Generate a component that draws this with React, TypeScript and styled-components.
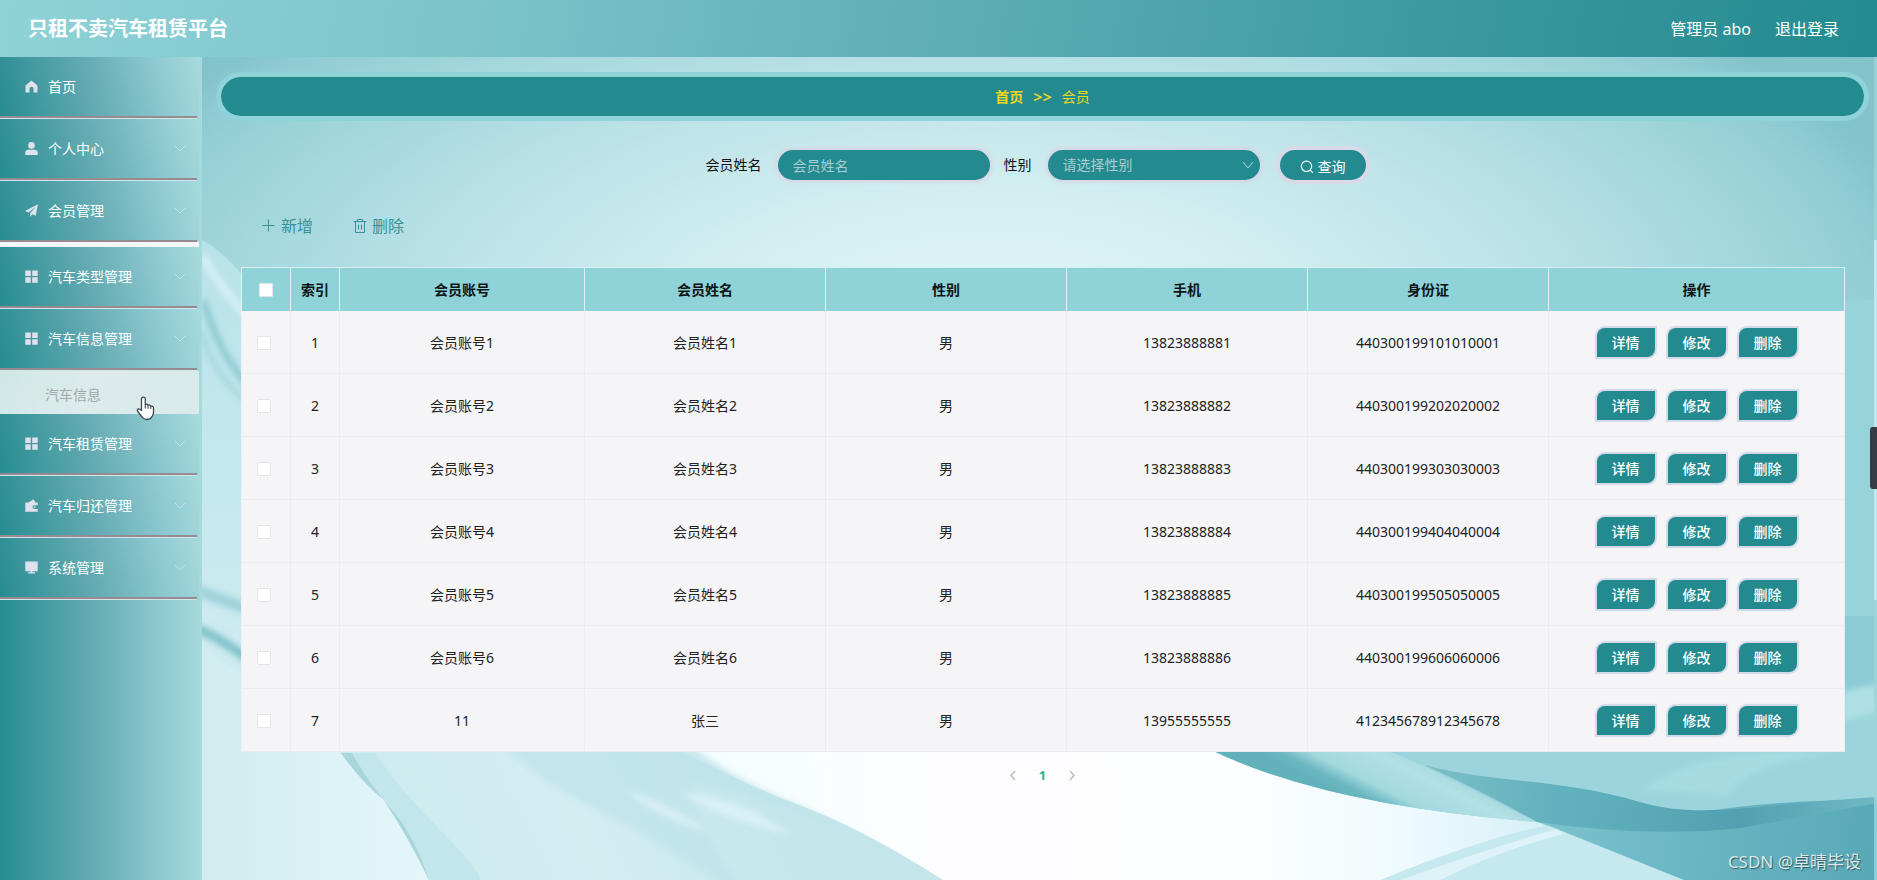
import React from "react";
import styled, { createGlobalStyle, css } from "styled-components";

const GlobalStyle = createGlobalStyle`
  * { box-sizing: border-box; }
  body {
    margin: 0;
    font-family: "Noto Sans", "Noto Sans CJK SC", sans-serif;
    font-size: 14px;
    line-height: 20px;
    color: #222;
  }
  button, input, select { font: inherit; margin: 0; }
  a { color: inherit; text-decoration: none; }
`;

const teal = "#238b90";
const aqua = "#8fd2d8";
const lilac = "#d9d9e8";

const Page = styled.div`
  min-height: 100vh;
  display: flex;
  flex-direction: column;
`;

const Header = styled.header`
  height: 57px;
  padding: 0 38px 0 28px;
  display: flex;
  align-items: center;
  justify-content: space-between;
  color: #fff;
  background: linear-gradient(100deg, ${aqua} 0%, #7cc4ca 25%, #3a989e 78%, ${teal} 100%);
`;

const Title = styled.h1`
  margin: 0;
  font-size: 20px;
  line-height: 28px;
  font-weight: 700;
`;

const Account = styled.div`
  display: flex;
  gap: 24px;
  font-size: 16px;
  line-height: 24px;
`;

const Body = styled.div`
  flex: 1;
  display: flex;
`;

const Sidebar = styled.nav`
  flex: 0 0 202px;
  background: linear-gradient(90deg, #268c90 0%, #67acb4 48%, #8fcad2 80%, #a6dadd 100%);
`;

const MenuList = styled.ul`
  list-style: none;
  margin: 0;
  padding: 0;
`;

const MenuItem = styled.li<{ $divided?: boolean }>`
  margin-right: 3px;
  height: ${(p) => (p.$divided ? 66 : 62)}px;
  background: ${(p) =>
    p.$divided
      ? "linear-gradient(#f4f6f8, #f4f6f8) left bottom / 100% 5px no-repeat,"
      : "linear-gradient(#d3e6ea, #d3e6ea) left bottom / 197px 1px no-repeat,"}
    linear-gradient(76deg, #268c90 0%, #67acb4 48%, #8fcad2 80%, #a6dadd 100%);
`;

const menuRow = css`
  width: 197px;
  height: 61px;
  padding: 0 11px 0 25px;
  border: 0;
  border-bottom: 2px solid #978b92;
  display: flex;
  align-items: center;
  gap: 10px;
  color: #fff;
  font-size: 14px;
  text-align: left;
  background: none;
`;

const MenuLink = styled.a`
  ${menuRow}
`;

const MenuButton = styled.button`
  ${menuRow}
`;

const MenuText = styled.span`
  flex: 1;
`;

const SubItem = styled.a`
  position: relative;
  display: flex;
  align-items: center;
  height: 43px;
  margin-right: 3px;
  padding: 4px 0 0 45px;
  color: #9ea9ad;
  background: linear-gradient(120deg, #cfe7e6, #dcebeb 40%, #d8eaea);
`;

const Cursor = styled.svg`
  position: absolute;
  left: 136px;
  top: 25px;
  z-index: 2;
`;

const Main = styled.main`
  position: relative;
  flex: 1;
  min-width: 0;
  padding: 15px 8px 0 14px;
`;

const Backdrop = styled.svg`
  position: absolute;
  inset: 0;
  width: 100%;
  height: 100%;
  z-index: -1;
`;

const Breadcrumb = styled.nav`
  height: 49px;
  border: 5px solid ${aqua};
  border-radius: 25px;
  background: ${teal};
  background-clip: padding-box;
  display: flex;
  align-items: center;
  justify-content: center;
  gap: 10px;
  color: #f0d81e;
`;

const Crumb = styled.a`
  font-weight: 700;
`;

const Arrows = styled.span`
  font-size: 16px;
  font-weight: 600;
`;

const Panel = styled.section`
  padding: 29px 25px 0;
`;

const SearchForm = styled.form`
  display: flex;
  align-items: center;
  justify-content: center;
`;

const Field = styled.label`
  display: flex;
  align-items: center;
  gap: 16px;
  margin-right: 14px;
  color: #111;
`;

const control = css`
  width: 212px;
  height: 30px;
  padding: 0 15px;
  border: 0;
  border-radius: 15px;
  outline: 0;
  background: ${teal};
  color: #a9cdd0;
  box-shadow: 0 0 4px 2px #d9d3e4;
`;

const TextInput = styled.input`
  ${control}
  &::placeholder { color: #a9cdd0; opacity: 1; }
`;

const SelectWrap = styled.span`
  position: relative;
  display: flex;
`;

const Select = styled.select`
  ${control}
  appearance: none;
`;

const SelectArrow = styled.span`
  position: absolute;
  right: 6px;
  top: 10px;
  display: flex;
  color: #b4d2d8;
  pointer-events: none;
`;

const SearchButton = styled.button`
  width: 86px;
  height: 30px;
  margin: 0 14px 0 6px;
  padding: 4px 0 0;
  border: 0;
  border-radius: 15px;
  display: flex;
  align-items: center;
  justify-content: center;
  gap: 4px;
  color: #fff;
  background: ${teal};
  box-shadow: 0 0 1px 4px ${lilac};
`;

const Toolbar = styled.div`
  display: flex;
  gap: 40px;
  padding: 34px 0 29px 21px;
`;

const ToolButton = styled.button`
  display: flex;
  align-items: center;
  gap: 5px;
  padding: 0;
  border: 0;
  background: none;
  color: #3a9296;
  font-size: 16px;
  line-height: 24px;
`;

const Table = styled.table`
  width: 100%;
  table-layout: fixed;
  border-collapse: separate;
  border-spacing: 0;
  border-left: 1px solid #e8f2f5;
  text-align: center;
`;

const HeadCell = styled.th`
  height: 44px;
  padding: 0;
  border-top: 1px solid #d4eef2;
  border-right: 1px solid #e0f2f5;
  background: ${aqua};
  color: #0b1414;
  font-weight: 700;
`;

const Cell = styled.td`
  height: 63px;
  padding: 1px 0 0;
  border-right: 1px solid #ebebf4;
  border-bottom: 1px solid #ebebf4;
  background: #f5f4f7;
`;

const CheckBox = styled.input`
  appearance: none;
  display: block;
  width: 14px;
  height: 14px;
  margin: 0 auto;
  border: 1px solid #e3e5e8;
  border-radius: 1px;
  background: #fff;
`;

const CheckCell = styled(Cell)`
  padding-right: 4px;
`;

const Actions = styled.div`
  display: flex;
  justify-content: center;
  gap: 13px;
`;

const ActionButton = styled.button`
  width: 58px;
  height: 29px;
  padding: 0;
  border: 0;
  border-radius: 8px 0 8px 0;
  color: #fff;
  font-weight: 500;
  background: ${teal};
  box-shadow: 0 0 1px 2px #d3d9e8;
`;

const Pagination = styled.nav`
  display: flex;
  justify-content: center;
  align-items: center;
  gap: 22px;
  padding-top: 13px;
`;

const PageArrow = styled.button`
  display: flex;
  padding: 0;
  border: 0;
  background: none;
  color: #b9bdc2;
`;

const PageNumber = styled.button`
  padding: 0;
  border: 0;
  background: none;
  color: #2fb388;
  font-size: 13px;
  font-weight: 700;
`;

const Watermark = styled.div`
  position: absolute;
  right: 16px;
  bottom: 6px;
  font-size: 17px;
  line-height: 24px;
  color: #d9e8ea;
  text-shadow: 1px 1px 1px #35565d;
`;

const SideTab = styled.div`
  position: absolute;
  right: 0;
  top: 370px;
  width: 7px;
  height: 62px;
  border-radius: 3px 0 0 3px;
  background: #343d41;
`;

const iconPaths: Record<string, React.ReactNode> = {
  home: <path d="M6.500 0.500L0.500 5.400V12.500H4.500V8.800a2 2 0 0 1 4 0V12.500H12.500V5.400Z" />,
  user: (
    <>
      <circle cx="6.500" cy="3.400" r="3.300" />
      <path d="M0.300 13v-2.200Q0.300 7.800 3.300 7.800H9.700Q12.700 7.800 12.700 10.800V13Z" />
    </>
  ),
  send: <path d="M13 0.300L0 7l3.700 1.500L10.400 3 5.200 9.200V13l2.100-2.700 3.400 1.500Z" />,
  grid: <path d="M0.300 0.500h5.500v5.500H0.300zM7.200 0.500h5.500v5.500H7.200zM0.300 7.200h5.500v5.500H0.300zM7.200 7.200h5.500v5.500H7.200z" />,
  wallet: (
    <path d="M0.300 3.600H3.400L8.600 0.300 10.500 3.600H12.700V6.300H9.300A1.800 1.800 0 0 0 9.300 9.900H12.700V12.700H0.300ZM9.500 7.200a0.900 0.900 0 1 1 0 1.800a0.900 0.900 0 1 1 0-1.800Z" />
  ),
  screen: <path d="M0.300 0.500h12.400v9.700H0.300zM5.500 10.200h2v1h2.500v1.300H3v-1.300h2.500z" />,
};

const MenuIcon = ({ name }: { name: string }) => (
  <svg width="13" height="13" viewBox="0 0 13 13" fill="#dfe2ee" aria-hidden="true">
    {iconPaths[name]}
  </svg>
);

const Chevron = ({ d = "M1 1l5 5 5-5", w = 12, h = 8, sw = 1 }) => (
  <svg width={w} height={h} viewBox={`0 0 ${w} ${h}`} fill="none" stroke="currentColor" strokeWidth={sw} aria-hidden="true">
    <path d={d} />
  </svg>
);

const MenuArrow = styled.span`
  display: flex;
  color: #c6e2e8;
`;

const menu = [
  { label: "首页", icon: "home", leaf: true },
  { label: "个人中心", icon: "user" },
  { label: "会员管理", icon: "send", divided: true },
  { label: "汽车类型管理", icon: "grid" },
  { label: "汽车信息管理", icon: "grid", sub: "汽车信息" },
  { label: "汽车租赁管理", icon: "grid" },
  { label: "汽车归还管理", icon: "wallet" },
  { label: "系统管理", icon: "screen" },
];

const rows = [
  ["会员账号1", "会员姓名1", "男", "13823888881", "440300199101010001"],
  ["会员账号2", "会员姓名2", "男", "13823888882", "440300199202020002"],
  ["会员账号3", "会员姓名3", "男", "13823888883", "440300199303030003"],
  ["会员账号4", "会员姓名4", "男", "13823888884", "440300199404040004"],
  ["会员账号5", "会员姓名5", "男", "13823888885", "440300199505050005"],
  ["会员账号6", "会员姓名6", "男", "13823888886", "440300199606060006"],
  ["11", "张三", "男", "13955555555", "412345678912345678"],
];

const columns = ["会员账号", "会员姓名", "性别", "手机", "身份证", "操作"];
const columnWidths = [49, 49, 245, 241, 241, 241, 241, 296];

const Waves = () => (
  <Backdrop viewBox="202 57 1675 823" preserveAspectRatio="none" aria-hidden="true">
    <defs>
      <radialGradient id="sky" gradientUnits="userSpaceOnUse" cx="0" cy="0" r="1" gradientTransform="translate(990 330) scale(960 440)">
        <stop offset="0" stopColor="#e2f6f6" />
        <stop offset="0.300" stopColor="#d4eff1" />
        <stop offset="0.600" stopColor="#bae1e8" />
        <stop offset="0.800" stopColor="#a2d7dc" />
        <stop offset="0.930" stopColor="#92cdd5" />
        <stop offset="1" stopColor="#84c3cc" />
      </radialGradient>
      <linearGradient id="floor" gradientUnits="userSpaceOnUse" x1="202" y1="0" x2="1877" y2="0">
        <stop offset="0" stopColor="#cfecef" />
        <stop offset="0.100" stopColor="#e0f4f8" />
        <stop offset="0.300" stopColor="#f5feff" />
        <stop offset="0.440" stopColor="#fdfdff" />
        <stop offset="0.620" stopColor="#fdfeff" />
        <stop offset="0.720" stopColor="#eefafd" />
        <stop offset="0.820" stopColor="#d0edf4" />
        <stop offset="1" stopColor="#b5dfe8" />
      </linearGradient>
      <linearGradient id="veil" gradientUnits="userSpaceOnUse" x1="400" y1="860" x2="720" y2="700">
        <stop offset="0" stopColor="#cdebee" />
        <stop offset="0.500" stopColor="#d3edf1" />
        <stop offset="1" stopColor="#c4e6eb" />
      </linearGradient>
      <linearGradient id="sheet" gradientUnits="userSpaceOnUse" x1="1350" y1="800" x2="1390" y2="720">
        <stop offset="0" stopColor="#62b2bb" />
        <stop offset="0.120" stopColor="#6ab7c0" />
        <stop offset="0.280" stopColor="#a3d8de" />
        <stop offset="0.600" stopColor="#b3e1e7" />
        <stop offset="1" stopColor="#93cdd3" />
      </linearGradient>
      <linearGradient id="deep" gradientUnits="userSpaceOnUse" x1="1500" y1="800" x2="1877" y2="870">
        <stop offset="0" stopColor="#7fc6d1" />
        <stop offset="1" stopColor="#57a8b6" />
      </linearGradient>
      <linearGradient id="ribbon" gradientUnits="userSpaceOnUse" x1="1424" y1="760" x2="1877" y2="800">
        <stop offset="0" stopColor="#7bbfc6" />
        <stop offset="0.300" stopColor="#62b1be" />
        <stop offset="0.700" stopColor="#51a1b0" />
        <stop offset="1" stopColor="#70b9c4" />
      </linearGradient>
      <linearGradient id="edge" x1="0" y1="0" x2="0" y2="1">
        <stop offset="0" stopColor="#b8e2e9" />
        <stop offset="0.500" stopColor="#c4e8ee" />
        <stop offset="1" stopColor="#cfebf1" />
      </linearGradient>
      <filter id="soft" x="-30%" y="-30%" width="160%" height="160%">
        <feGaussianBlur stdDeviation="3" />
      </filter>
    </defs>
    <rect x="202" y="57" width="1675" height="823" fill="url(#sky)" />

    <path d="M202 600H1800V880H202Z" fill="url(#floor)" />
    <path d="M202 240Q225 252 250 285V680Q225 665 202 642Z" fill="url(#edge)" />
    <g filter="url(#soft)" fill="none">
      <path d="M202 256Q222 290 250 320" stroke="#d6eff5" strokeWidth="8" />
      <path d="M204 300Q216 350 250 388" stroke="#86c6cf" strokeWidth="6" />
      <path d="M200 330Q216 380 250 404" stroke="#a3d6dd" strokeWidth="5" />
      <path d="M196 590L250 610" stroke="#9fd2da" strokeWidth="11" />
      <path d="M196 628Q224 640 252 662" stroke="#7fc1c9" strokeWidth="9" />
    </g>

    <path d="M341 753L330 735H650L686 753Q745 785 804 807T943 880H429Q410 840 384 800Q366 783 341 753Z" fill="url(#veil)" />
    <path d="M341 753H375Q400 790 440 830T480 880H429Q410 840 384 800Q366 783 341 753Z" fill="#c3e6ec" />
    <path d="M341 753H352Q370 785 392 810T429 880Q410 840 384 800Q362 783 341 753Z" fill="#a9d6dc" />
    <g filter="url(#soft)">
      <path d="M505 745H690Q745 785 804 807Q830 820 870 842Q760 792 690 785Q700 830 740 885H725Q640 830 585 803Q530 775 505 745Z" fill="#bfe3ea" opacity="0.800" />
      <path d="M625 790Q660 800 710 832Q660 820 625 790ZM680 793Q750 800 790 835Q725 820 680 793Z" fill="#d9f1f5" />
    </g>

    <path d="M1205 747Q1320 805 1537 822L1684 880H1877V400H1780Z" fill="#9bd4dc" />
    <path d="M1205 747H1380L1424 766L1537 822Q1320 805 1205 747Z" fill="url(#sheet)" />
    <path d="M1380 880Q1490 835 1550 825L1684 880Z" fill="#c6e8ef" />
    <path d="M1400 880Q1500 845 1556 829L1564 834Q1500 850 1440 880Z" fill="#def3f8" />
    <path d="M1537 821L1684 880H1877V800Q1760 800 1688 815Z" fill="url(#deep)" />
    <path d="M1424 765C1490 783 1560 778 1640 802C1700 820 1760 804 1877 797V803Q1775 822 1740 828Q1650 838 1537 822Q1480 790 1424 765Z" fill="url(#ribbon)" />
    <path d="M1640 790Q1700 750 1800 752H1845Q1740 765 1730 795Z" fill="#aee1e7" opacity="0.600" filter="url(#soft)" />

    <path d="M1843 300H1877V690H1843Z" fill="#98d2da" />
    <path d="M1843 616H1877V697H1843Z" fill="#8ccad4" />
    <path d="M1843 692Q1860 687 1877 684V712L1843 720Z" fill="#b0e0e7" filter="url(#soft)" />
    <path d="M1874 57H1877V880H1874Z" fill="#9fd4db" opacity="0.800" />
    <path d="M1874 240H1877V600H1874Z" fill="#c2e6ec" />
  </Backdrop>
);

export default function App() {
  return (
    <Page>
      <GlobalStyle />
      <Header>
        <Title>只租不卖汽车租赁平台</Title>
        <Account>
          <span>管理员 abo</span>
          <a href="#logout">退出登录</a>
        </Account>
      </Header>
      <Body>
        <Sidebar>
          <MenuList>
            {menu.map((m) => (
              <React.Fragment key={m.label}>
                <MenuItem $divided={m.divided}>
                  {m.leaf ? (
                    <MenuLink href="#home">
                      <MenuIcon name={m.icon} />
                      <MenuText>{m.label}</MenuText>
                    </MenuLink>
                  ) : (
                    <MenuButton type="button" aria-expanded={!!m.sub}>
                      <MenuIcon name={m.icon} />
                      <MenuText>{m.label}</MenuText>
                      <MenuArrow>
                        <Chevron />
                      </MenuArrow>
                    </MenuButton>
                  )}
                </MenuItem>
                {m.sub && (
                  <li>
                    <SubItem href="#cars">
                      {m.sub}
                      <Cursor width="19" height="25" viewBox="0 0 19 25" aria-hidden="true">
                        <path
                          d="M5.500 14.500V3a1.900 1.900 0 0 1 3.800 0V8.500Q10.900 7.300 12 9.200Q13.800 8.300 14.700 10.300Q17.500 9.500 17.500 12.500V16.500Q17.300 19 15.700 21Q14.500 23.500 10.500 23.500Q7.500 23.400 6 21L1.500 15Q1 13 2.800 12.800Q4 12.800 5.500 14.500Z"
                          fill="#fff"
                          stroke="#414a52"
                          strokeWidth="1.300"
                          strokeLinejoin="round"
                        />
                        <path d="M9.300 8.500V12.500M12 9.300V12.700M14.700 10.300V13" stroke="#414a52" strokeWidth="1.100" />
                      </Cursor>
                    </SubItem>
                  </li>
                )}
              </React.Fragment>
            ))}
          </MenuList>
        </Sidebar>
        <Main>
          <Waves />
          <Breadcrumb>
            <Crumb href="#home">首页</Crumb>
            <Arrows>&gt;&gt;</Arrows>
            <span>会员</span>
          </Breadcrumb>
          <Panel>
            <SearchForm>
              <Field>
                会员姓名
                <TextInput type="text" placeholder="会员姓名" />
              </Field>
              <Field>
                性别
                <SelectWrap>
                  <Select defaultValue="">
                    <option value="">请选择性别</option>
                    <option value="男">男</option>
                    <option value="女">女</option>
                  </Select>
                  <SelectArrow>
                    <Chevron d="M1 2l5 6 5-6" h={10} />
                  </SelectArrow>
                </SelectWrap>
              </Field>
              <SearchButton type="button">
                <svg width="14" height="14" viewBox="0 0 14 14" fill="none" stroke="currentColor" strokeWidth="1.200" aria-hidden="true">
                  <circle cx="6.500" cy="6.300" r="5.200" />
                  <path d="M10.200 10l2.600 2.800" />
                </svg>
                查询
              </SearchButton>
            </SearchForm>
            <Toolbar>
              <ToolButton type="button">
                <svg width="14" height="14" viewBox="0 0 14 14" fill="none" stroke="currentColor" aria-hidden="true">
                  <path d="M6.500 0.500v12M0.500 6.500h12" />
                </svg>
                新增
              </ToolButton>
              <ToolButton type="button">
                <svg width="14" height="14" viewBox="0 0 14 14" fill="none" stroke="currentColor" aria-hidden="true">
                  <path d="M0.500 2.500h13M2.500 2.500v11h9v-11M4.500 2.500v-2h5v2M5.500 5.500v5M8.500 5.500v5" />
                </svg>
                删除
              </ToolButton>
            </Toolbar>
            <Table>
              <colgroup>
                {columnWidths.map((w, i) => (
                  <col key={i} width={w} />
                ))}
              </colgroup>
              <thead>
                <tr>
                  <HeadCell>
                    <CheckBox type="checkbox" aria-label="全选" />
                  </HeadCell>
                  <HeadCell>索引</HeadCell>
                  {columns.map((c) => (
                    <HeadCell key={c}>{c}</HeadCell>
                  ))}
                </tr>
              </thead>
              <tbody>
                {rows.map((r, i) => (
                  <tr key={r[0]}>
                    <CheckCell>
                      <CheckBox type="checkbox" aria-label={`选择第${i + 1}行`} />
                    </CheckCell>
                    <Cell>{i + 1}</Cell>
                    {r.map((v, j) => (
                      <Cell key={j}>{v}</Cell>
                    ))}
                    <Cell>
                      <Actions>
                        <ActionButton type="button">详情</ActionButton>
                        <ActionButton type="button">修改</ActionButton>
                        <ActionButton type="button">删除</ActionButton>
                      </Actions>
                    </Cell>
                  </tr>
                ))}
              </tbody>
            </Table>
            <Pagination>
              <PageArrow type="button" aria-label="上一页">
                <Chevron d="M6 1L2 5.500 6 10" w={8} h={11} sw={1.500} />
              </PageArrow>
              <PageNumber type="button">1</PageNumber>
              <PageArrow type="button" aria-label="下一页">
                <Chevron d="M2 1l4 4.500L2 10" w={8} h={11} sw={1.500} />
              </PageArrow>
            </Pagination>
          </Panel>
          <SideTab />
          <Watermark>CSDN @卓晴毕设</Watermark>
        </Main>
      </Body>
    </Page>
  );
}
